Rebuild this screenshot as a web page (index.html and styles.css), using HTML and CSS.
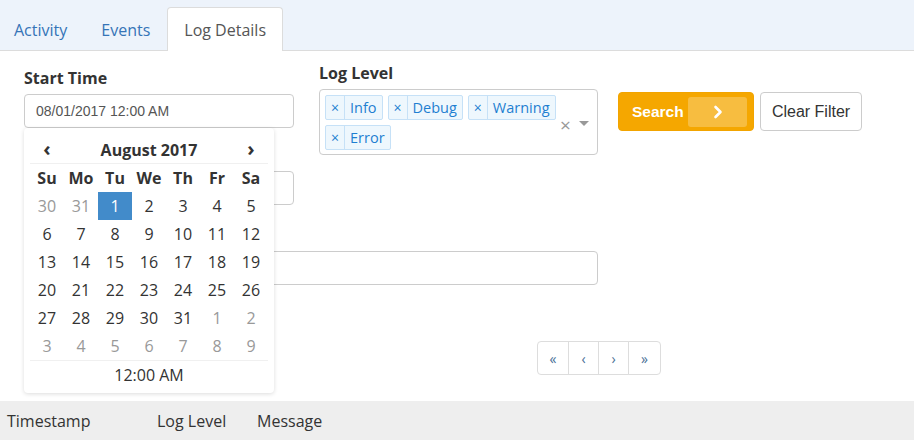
FILE: index.html
```html
<!DOCTYPE html>
<html>
<head>
<meta charset="utf-8">
<link rel="stylesheet" href="styles.css">
</head>
<body>
<div class="tabs">
  <a class="tab tab-first">Activity</a>
  <a class="tab">Events</a>
  <a class="tab active">Log Details</a>
</div>
<div class="filters">
  <div class="top">
    <div class="col-times">
      <div class="field field-start">
        <label class="lbl">Start Time</label>
        <input class="input" type="text" value="08/01/2017 12:00 AM">
        <div class="cal">
          <div class="cal-head">
            <span class="nav">‹</span>
            <span class="month">August 2017</span>
            <span class="nav">›</span>
          </div>
          <div class="cal-grid">
            <span class="dow">Su</span><span class="dow">Mo</span><span class="dow">Tu</span><span class="dow">We</span><span class="dow">Th</span><span class="dow">Fr</span><span class="dow">Sa</span>
            <span class="d old">30</span><span class="d old">31</span><span class="d sel">1</span><span class="d">2</span><span class="d">3</span><span class="d">4</span><span class="d">5</span>
            <span class="d">6</span><span class="d">7</span><span class="d">8</span><span class="d">9</span><span class="d">10</span><span class="d">11</span><span class="d">12</span>
            <span class="d">13</span><span class="d">14</span><span class="d">15</span><span class="d">16</span><span class="d">17</span><span class="d">18</span><span class="d">19</span>
            <span class="d">20</span><span class="d">21</span><span class="d">22</span><span class="d">23</span><span class="d">24</span><span class="d">25</span><span class="d">26</span>
            <span class="d">27</span><span class="d">28</span><span class="d">29</span><span class="d">30</span><span class="d">31</span><span class="d old">1</span><span class="d old">2</span>
            <span class="d old">3</span><span class="d old">4</span><span class="d old">5</span><span class="d old">6</span><span class="d old">7</span><span class="d old">8</span><span class="d old">9</span>
          </div>
          <div class="cal-time">12:00 AM</div>
        </div>
      </div>
      <div class="field field-end">
        <label class="lbl lbl-covered">End Time</label>
        <input class="input" type="text" value="">
      </div>
    </div>
    <div class="field field-level">
      <label class="lbl">Log Level</label>
      <div class="select">
        <div class="values">
          <span class="tag"><span class="tag-x">×</span><span class="tag-l">Info</span></span>
          <span class="tag"><span class="tag-x">×</span><span class="tag-l">Debug</span></span>
          <span class="tag"><span class="tag-x">×</span><span class="tag-l">Warning</span></span>
          <span class="tag"><span class="tag-x">×</span><span class="tag-l">Error</span></span>
        </div>
        <span class="clear">×</span>
        <span class="arrow"></span>
      </div>
    </div>
    <div class="actions">
      <button class="btn btn-search">Search<span class="go"><svg width="10" height="14" viewBox="0 0 10 14"><polyline points="2.5,2 7.5,7 2.5,12" fill="none" stroke="#fff" stroke-width="2.6" stroke-linecap="round" stroke-linejoin="round"/></svg></span></button>
      <button class="btn btn-clear">Clear Filter</button>
    </div>
  </div>
  <div class="field field-msg">
    <label class="lbl lbl-covered">Message</label>
    <input class="input input-wide" type="text" value="">
  </div>
  <div class="pager">
    <a class="pg pg-first">«</a><a class="pg">‹</a><a class="pg">›</a><a class="pg pg-last">»</a>
  </div>
</div>
<div class="thead">
  <span class="th th-ts">Timestamp</span>
  <span class="th th-lvl">Log Level</span>
  <span class="th th-msg">Message</span>
</div>
</body>
</html>
```

FILE: styles.css
```css
* { box-sizing: border-box; }
body {
  margin: 0;
  font-family: "Open Sans", "DejaVu Sans", sans-serif;
  color: #333;
  background: #fff;
  width: 914px;
  height: 440px;
  overflow: hidden;
}
.tabs {
  display: flex;
  height: 51px;
  padding-top: 7px;
  background: #edf3fb;
  border-bottom: 1px solid #dcdcdc;
}
.tab {
  display: flex;
  align-items: center;
  height: 44px;
  padding: 0 16px;
  font-size: 16px;
  color: #3574b7;
  border: 1px solid transparent;
  border-bottom: none;
  border-radius: 4px 4px 0 0;
}
.tab-first { padding-left: 13px; }
.tab.active {
  background: #fff;
  color: #555;
  border-color: #dcdcdc;
  height: 44px;
  margin-bottom: -1px;
}
.filters { padding-left: 24px; }
.top { display: flex; align-items: flex-start; }
.col-times { width: 270px; }
.field { position: relative; }
.lbl {
  display: block;
  font-size: 16px;
  font-weight: 700;
  line-height: 20px;
  margin-bottom: 6px;
  color: #333;
}
.lbl-covered { visibility: hidden; }
.field-start { padding-top: 17px; }
.field-end { padding-top: 17px; }
.input {
  display: block;
  width: 270px;
  height: 34px;
  border: 1px solid #ccc;
  border-radius: 4px;
  padding: 0 11px;
  font-family: "Liberation Sans", Arial, sans-serif;
  font-size: 14px;
  color: #555;
  background: #fff;
  outline: none;
}
.input-wide { width: 574px; }
.field-level { margin-left: 25px; padding-top: 12px; width: 279px; }
.select {
  display: flex;
  align-items: center;
  height: 66px;
  border: 1px solid #ccc;
  border-radius: 4px;
  background: #fff;
}
.values {
  display: flex;
  flex-wrap: wrap;
  align-content: flex-start;
  width: 240px;
  align-self: flex-start;
}
.tag {
  display: flex;
  margin: 5px 0 0 5px;
  height: 25px;
  border: 1px solid #c6e1f7;
  border-radius: 2px;
  background: #eef7fd;
  color: #1f7fd1;
  font-size: 14.5px;
  line-height: 23px;
}
.tag-x {
  width: 19px;
  text-align: center;
  border-right: 1px solid #c6e1f7;
  font-size: 14px;
}
.tag-l { padding: 0 5px; }
.clear {
  margin-left: 0;
  font-size: 19px;
  color: #999;
  line-height: 20px;
  margin-top: 6px;
}
.arrow {
  margin-left: 8px;
  margin-top: 3px;
  border-top: 5px solid #999;
  border-left: 5px solid transparent;
  border-right: 5px solid transparent;
  width: 0;
  height: 0;
}
.actions { display: flex; margin-left: 20px; margin-top: 41px; gap: 6px; }
.btn {
  height: 39px;
  border-radius: 4px;
  font-family: "Liberation Sans", Arial, sans-serif;
  cursor: pointer;
}
.btn-search {
  display: flex;
  align-items: center;
  width: 136px;
  padding: 0 6px 0 13px;
  border: 1px solid #f2a400;
  background: #f5a700;
  color: #fff;
  font-size: 15.5px;
  font-weight: 700;
}
.go {
  display: flex;
  align-items: center;
  justify-content: center;
  margin-left: auto;
  width: 59px;
  height: 30px;
  border-radius: 3px;
  background: rgba(255,255,255,0.25);
}
.btn-clear {
  width: 102px;
  border: 1px solid #ccc;
  background: #fff;
  color: #333;
  font-size: 16px;
  padding: 0;
}
.cal {
  position: absolute;
  left: 0;
  top: 100%;
  width: 250px;
  padding: 8px 6px 4px;
  background: #fff;
  border-radius: 4px;
  box-shadow: 0 1px 4px rgba(0,0,0,0.14);
  z-index: 5;
}
.cal-head {
  display: flex;
  align-items: center;
  height: 28px;
  border-bottom: 1px solid #f0f0f0;
  font-weight: 700;
  font-size: 16px;
}
.nav {
  width: 34px;
  text-align: center;
  font-size: 20px;
  line-height: 20px;
  margin-top: -2px;
}
.month { flex: 1; text-align: center; }
.cal-grid {
  display: grid;
  grid-template-columns: repeat(7, 34px);
  grid-auto-rows: 28px;
  border-bottom: 1px solid #f0f0f0;
}
.cal-grid span {
  display: flex;
  align-items: center;
  justify-content: center;
  font-size: 16px;
}
.dow { font-weight: 700; }
.d.old { color: #999; }
.d.sel { background: #428bca; color: #fff; }
.cal-time {
  height: 28px;
  line-height: 28px;
  text-align: center;
  font-size: 16px;
}
.field-msg { margin-top: 20px; }
.pager { display: flex; margin: 56px 0 0 513px; }
.pg {
  display: flex;
  align-items: center;
  justify-content: center;
  width: 31px;
  height: 34px;
  border: 1px solid #ddd;
  margin-left: -1px;
  color: #4a6f96;
  font-size: 14px;
  background: #fff;
}
.pg-first { margin-left: 0; border-radius: 4px 0 0 4px; width: 32px; }
.pg-last { border-radius: 0 4px 4px 0; width: 33px; }
.thead {
  display: flex;
  align-items: center;
  margin-top: 26px;
  height: 39px;
  background: #eee;
  font-size: 16px;
  color: #333;
}
.th-ts { width: 150px; padding-left: 7px; }
.th-lvl { width: 100px; padding-left: 7px; }
.th-msg { padding-left: 7px; }
```
